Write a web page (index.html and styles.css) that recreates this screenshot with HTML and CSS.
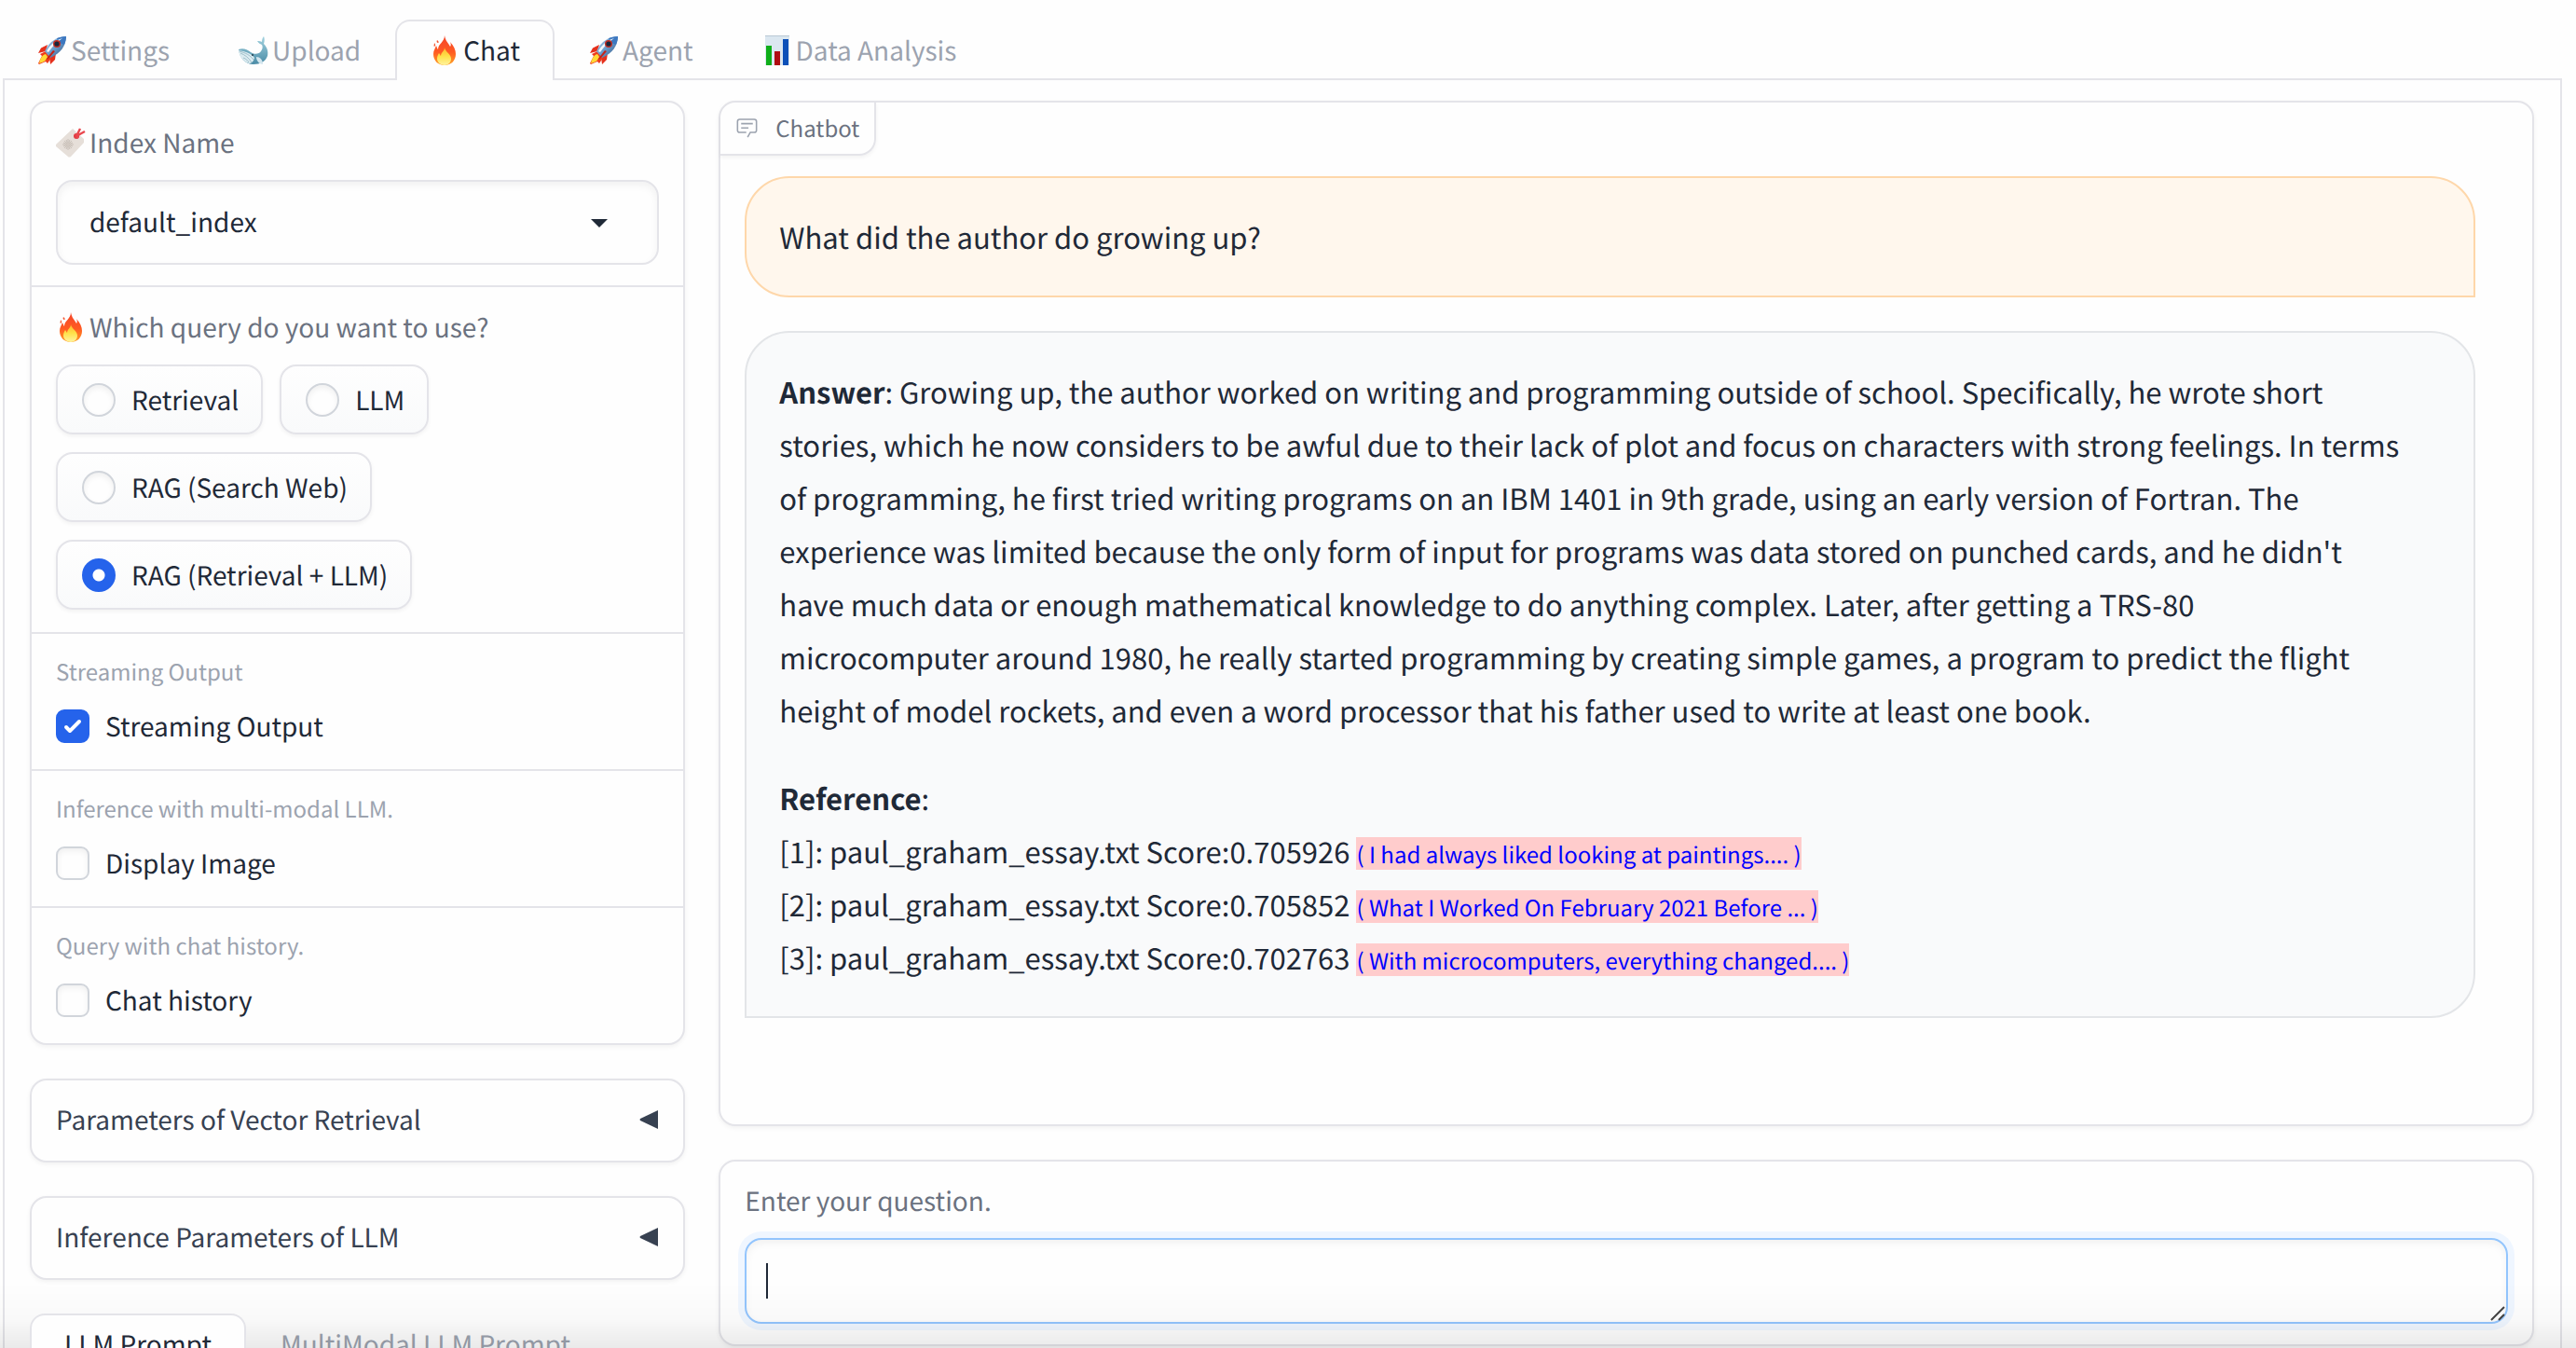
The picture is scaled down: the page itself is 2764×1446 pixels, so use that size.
FILE: index.html
```html
<!DOCTYPE html>
<html lang="en">
<head>
<meta charset="utf-8">
<title>Chat</title>
<link rel="stylesheet" href="styles.css">
</head>
<body>
<svg class="defs" aria-hidden="true">
  <defs>
    <linearGradient id="flame" x1="0" y1="0" x2="0" y2="1"><stop offset="0" stop-color="#f4452a"/><stop offset=".55" stop-color="#ff5a22"/><stop offset="1" stop-color="#ffa125"/></linearGradient>
    <linearGradient id="flame-core" x1="0" y1="0" x2="0" y2="1"><stop offset="0" stop-color="#ffb52b"/><stop offset=".5" stop-color="#ffe14a"/><stop offset="1" stop-color="#fff3a0"/></linearGradient>
    <linearGradient id="hull" x1="0" y1="0" x2="1" y2="1"><stop offset="0" stop-color="#b9d3ea"/><stop offset=".5" stop-color="#6a9ccb"/><stop offset="1" stop-color="#2f4f7c"/></linearGradient>
    <linearGradient id="whale-body" x1="0" y1="0" x2="0" y2="1"><stop offset="0" stop-color="#a3d3e0"/><stop offset="1" stop-color="#4a8ba6"/></linearGradient>
    <symbol id="rocket" viewBox="0 0 32 32">
      <path d="M11 10 4 13.5 1 19l8-2zM20 19l-1 7-5 5-1-8z" fill="#e5301c"/>
      <path d="M9 17 3 20l2 2-4 8 1 1 7-3 2 2 4-6z" fill="#ee3b1c"/>
      <path d="M9 20c-4 1-6 5-7 10 4-1 8-3 9-7z" fill="#ffd935"/>
      <path d="M31 1C22 1 13 6 8 17l6 7C25 19 31 11 31 1z" fill="url(#hull)"/>
      <path d="M31 1c-4 0-7 1-10 2 1 4 4 6 8 7 1-3 2-6 2-9z" fill="#3d78c0"/>
      <path d="M27 3C19 5 13 11 10 17l2 1C16 12 21 7 27 3z" fill="#f2f7fb"/>
      <circle cx="21" cy="9" r="4" fill="#c22c22"/><circle cx="21" cy="9" r="2.6" fill="#18253b"/>
      <path d="M17 16 9 26l3-1 7-8z" fill="#c82116"/>
    </symbol>
    <symbol id="whale" viewBox="0 0 32 32">
      <path d="M0 15c5-2 9 0 13 3 4 3 9 2 11-1 2-3 2-5 1-7-2-1-4-2-5-4 2 0 4 0 5 1 0-3 1-5 2-6 1 2 1 5 0 8 4 4 5 9 4 13-2 6-8 9-15 9C7 31 1 24 0 15z" fill="url(#whale-body)"/>
      <path d="M0 16c7 1 13 3 17 8-1 4-3 6-6 6C5 28 1 23 0 16z" fill="#dcecf1"/>
      <path d="M2 19c5 2 9 5 12 10M1 17c7 2 11 4 15 9M5 24c3 1 5 3 6 5" fill="none" stroke="#8eb1bf" stroke-width=".8"/>
      <path d="M19 23c4 0 7 3 7 8-4 0-7-4-7-8z" fill="#d3e6ee"/>
      <circle cx="15" cy="21" r="1" fill="#233d4b"/>
    </symbol>
    <symbol id="fire" viewBox="0 0 32 32">
      <path d="M16 0c1 6 4 8 6 12 1-1 1-3 0-5 4 4 6 9 6 13 0 7-5 12-12 12S4 27 4 20c0-4 2-6 3-9 1 2 1 3 2 4 0-6 7-8 7-15z" fill="url(#flame)"/>
      <path d="M5 8c0 2-1 3 0 4 2-1 1-3 0-4zM8 5c-1 2 0 3 1 3s1-2-1-3z" fill="#f4512b"/>
      <path d="M16 13c1 5 7 7 7 12 0 4-3 7-7 7s-8-3-8-7c0-3 1-4 2-6 1 1 1 2 2 3 0-4 4-5 4-9z" fill="url(#flame-core)"/>
    </symbol>
    <symbol id="bars" viewBox="0 0 32 32">
      <path d="M3 0h26v32H3z" fill="#dbe7f0"/><path d="M3 0h26v1H3z" fill="#b9c8d4"/>
      <path d="M4 11h6v21H4z" fill="#0fae1a"/><path d="M13 17h6v15h-6z" fill="#b00d12"/><path d="M22 4h6v28h-6z" fill="#0c50b8"/>
    </symbol>
    <symbol id="tag" viewBox="0 0 32 32">
      <path d="M18 1 30 12v4L16 31q-2 1-3 0L0 20v-2z" fill="#e6dfd9"/>
      <g stroke="#c5bcb4" stroke-width=".9"><path d="M13 12v12M7 18h12M9 14l8 8M17 14l-8 8M11 13l4 10M8 16l10 4M8 20l10-4M11 23l4-10"/></g>
      <circle cx="13" cy="18" r="2" fill="#d2c9c2"/>
      <circle cx="22" cy="9" r="3" fill="#e23c42"/><path d="m22 9 4-8m-4 8 9-5m-9 5 2 2" fill="none" stroke="#e9474e" stroke-width="2.4"/>
    </symbol>
  </defs>
</svg>

<div class="app">
  <nav class="tabs" aria-label="Sections">
    <button class="tab"><svg class="emoji"><use href="#rocket"/></svg>Settings</button>
    <button class="tab"><svg class="emoji"><use href="#whale"/></svg>Upload</button>
    <button class="tab active"><svg class="emoji"><use href="#fire"/></svg>Chat</button>
    <button class="tab"><svg class="emoji"><use href="#rocket"/></svg>Agent</button>
    <button class="tab"><svg class="emoji"><use href="#bars"/></svg>Data Analysis</button>
  </nav>

  <main class="panel">
    <div class="column">
      <form class="card">
        <div class="section">
          <label class="label" for="index"><svg class="emoji"><use href="#tag"/></svg>Index Name</label>
          <div class="select">
            <select id="index"><option>default_index</option></select>
            <svg class="chevron" viewBox="0 0 18 9"><path d="M0 0h18L9 9z"/></svg>
          </div>
        </div>
        <fieldset class="section">
          <legend class="label"><svg class="emoji"><use href="#fire"/></svg>Which query do you want to use?</legend>
          <div class="choices">
            <label class="choice"><input type="radio" name="query">Retrieval</label>
            <label class="choice"><input type="radio" name="query">LLM</label>
            <label class="choice"><input type="radio" name="query">RAG (Search Web)</label>
            <label class="choice"><input type="radio" name="query" checked>RAG (Retrieval + LLM)</label>
          </div>
        </fieldset>
        <div class="section toggle">
          <span class="info">Streaming Output</span>
          <label class="check"><input type="checkbox" checked>Streaming Output</label>
        </div>
        <div class="section toggle">
          <span class="info">Inference with multi-modal LLM.</span>
          <label class="check"><input type="checkbox">Display Image</label>
        </div>
        <div class="section toggle">
          <span class="info">Query with chat history.</span>
          <label class="check"><input type="checkbox">Chat history</label>
        </div>
      </form>

      <button class="card accordion">Parameters of Vector Retrieval<svg class="arrow" viewBox="0 0 20 20"><path d="M20 0v20L1 11q-1-1 0-2z"/></svg></button>
      <button class="card accordion">Inference Parameters of LLM<svg class="arrow" viewBox="0 0 20 20"><path d="M20 0v20L1 11q-1-1 0-2z"/></svg></button>

      <nav class="tabs inner" aria-label="Prompts">
        <button class="tab active">LLM Prompt</button>
        <button class="tab">MultiModal LLM Prompt</button>
      </nav>
    </div>

    <div class="column">
      <section class="card chatbot">
        <h2 class="badge">
          <svg class="chat-icon" viewBox="0 0 32 32"><path d="M17.74 30 16 29l4-7h6a2 2 0 0 0 2-2V8a2 2 0 0 0-2-2H6a2 2 0 0 0-2 2v12a2 2 0 0 0 2 2h9v2H6a4 4 0 0 1-4-4V8a4 4 0 0 1 4-4h20a4 4 0 0 1 4 4v12a4 4 0 0 1-4 4h-4.84Z"/><path d="M8 10h16v2H8zM8 16h10v2H8z"/></svg>
          Chatbot
        </h2>
        <div class="message user"><p>What did the author do growing up?</p></div>
        <div class="message bot">
          <p><b>Answer</b>: Growing up, the author worked on writing and programming outside of school. Specifically, he wrote short stories, which he now considers to be awful due to their lack of plot and focus on characters with strong feelings. In terms of programming, he first tried writing programs on an IBM 1401 in 9th grade, using an early version of Fortran. The experience was limited because the only form of input for programs was data stored on punched cards, and he didn't have much data or enough mathematical knowledge to do anything complex. Later, after getting a TRS-80 microcomputer around 1980, he really started programming by creating simple games, a program to predict the flight height of model rockets, and even a word processor that his father used to write at least one book.</p>
          <p><b>Reference</b>:<br>
          [1]: paul_graham_essay.txt Score:0.705926 <a class="source" href="#ref1">( I had always liked looking at paintings.... )</a><br>
          [2]: paul_graham_essay.txt Score:0.705852 <a class="source" href="#ref2">( What I Worked On February 2021 Before ... )</a><br>
          [3]: paul_graham_essay.txt Score:0.702763 <a class="source" href="#ref3">( With microcomputers, everything changed.... )</a></p>
        </div>
      </section>

      <section class="card question">
        <label class="label" for="question">Enter your question.</label>
        <div class="field">
          <textarea id="question" rows="1"></textarea>
          <span class="caret"></span>
          <svg class="grip" viewBox="0 0 16 16"><path d="M1 15 15 1M9 15l6-6"/></svg>
        </div>
      </section>
    </div>
  </main>
</div>
<div class="fade"></div>
</body>
</html>
```
FILE: styles.css
```css
:root {
  --line: #e4e4e9;
  --text: #1f2937;
  --label: #6b7280;
  --muted: #9ca3af;
}

* { box-sizing: border-box; }

body {
  margin: 0;
  height: 100vh;
  overflow: hidden;
  background: #fefefe;
  color: var(--text);
  font-family: "Noto Sans CJK SC", "Noto Sans", sans-serif;
  font-size: 28px;
  line-height: 40px;
  text-rendering: geometricPrecision;
}

button, select, textarea { font: inherit; color: inherit; text-rendering: inherit; }
.defs { position: absolute; width: 0; height: 0; }

.app {
  display: flex;
  flex-direction: column;
  min-height: 100vh;
  padding: 21px 15px 0 3px;
}

.tabs { display: flex; }
.tab {
  display: flex;
  align-items: center;
  height: 65px;
  padding: 0 35px 2px;
  border: 2px solid transparent;
  border-bottom: 0;
  background: none;
  color: var(--muted);
  white-space: nowrap;
}
.tab.active {
  border-color: var(--line);
  border-radius: 16px 16px 0 0;
  background: #fefefe;
  color: var(--text);
}
.emoji { flex: none; width: 32px; height: 32px; margin-right: 4px; }

.panel {
  flex: 1;
  display: grid;
  grid-template-columns: minmax(0, 13fr) minmax(0, 36fr);
  align-items: start;
  gap: 36px;
  margin-top: -2px;
  padding: 22px 28px 22px 27px;
  border: 2px solid var(--line);
}
.tabs .active { position: relative; z-index: 1; }
.column { display: flex; flex-direction: column; gap: 36px; }

.card {
  border: 2px solid var(--line);
  border-radius: 18px;
  background: #fefefe;
  box-shadow: 0 2px 5px rgba(0, 0, 0, .05);
}
.section {
  margin: 0;
  padding: 23px 26px 22px;
  border: 0;
  border-bottom: 2px solid var(--line);
}
.section:last-child { border-bottom: 0; }
.label {
  display: flex;
  align-items: center;
  margin-bottom: 20px;
  padding: 0;
  color: var(--label);
}
fieldset.section { padding-bottom: 24px; }
fieldset .label { float: left; width: 100%; }

.select { position: relative; }
.select select {
  appearance: none;
  display: block;
  width: 100%;
  height: 91px;
  padding: 0 34px 2px;
  border: 2px solid var(--line);
  border-radius: 18px;
  background: #fefefe;
  box-shadow: inset 0 4px 8px rgba(0, 0, 0, .05);
}
.chevron { position: absolute; right: 55px; top: 42px; width: 18px; height: 9px; fill: var(--text); }

.choices { clear: both; display: flex; flex-wrap: wrap; gap: 19px 18px; }
.choice {
  display: flex;
  align-items: center;
  gap: 17px;
  height: 75px;
  padding: 0 24px 0 26px;
  border: 2px solid var(--line);
  border-radius: 18px;
  background: linear-gradient(#fefefe, #f9fafb);
  box-shadow: 0 2px 4px rgba(0, 0, 0, .05);
}
input {
  appearance: none;
  flex: none;
  width: 36px;
  height: 36px;
  margin: 0;
  border: 2px solid #d1d5db;
  background: #fefefe center / 100% no-repeat;
  box-shadow: inset 0 3px 6px rgba(0, 0, 0, .06);
}
input[type="radio"] { border-radius: 50%; }
input[type="checkbox"] { border-radius: 9px; }
input:checked { border-color: #2563eb; background-color: #2563eb; box-shadow: none; }
input[type="radio"]:checked { background-image: radial-gradient(circle, #fff 6px, transparent 7px); }
input[type="checkbox"]:checked {
  background-image: url("data:image/svg+xml,%3Csvg viewBox='0 0 16 16' fill='white' xmlns='http://www.w3.org/2000/svg'%3E%3Cpath d='M12.207 4.793a1 1 0 010 1.414l-5 5a1 1 0 01-1.414 0l-2-2a1 1 0 011.414-1.414L6.5 9.086l4.293-4.293a1 1 0 011.414 0z'/%3E%3C/svg%3E");
}

.toggle { padding: 20px 26px 26px; }
.info { display: block; margin-bottom: 19px; font-size: 24px; line-height: 40px; color: var(--muted); }
.check { display: flex; align-items: center; gap: 17px; }

.accordion {
  display: flex;
  align-items: center;
  justify-content: space-between;
  height: 90px;
  padding: 0 27px 2px 26px;
  color: #374151;
}
.arrow { width: 20px; height: 20px; fill: #374151; }

.chatbot {
  position: relative;
  display: flex;
  flex-direction: column;
  gap: 36px;
  min-height: 1100px;
  padding: 79px 61px 36px 26px;
}
.badge {
  position: absolute;
  top: 0;
  left: 0;
  display: flex;
  align-items: center;
  gap: 18px;
  height: 57px;
  margin: 0;
  padding: 0 16px 2px;
  border: solid var(--line);
  border-width: 0 2px 2px 0;
  border-radius: 16px 0 18px 0;
  box-shadow: 0 2px 4px rgba(0, 0, 0, .05);
  color: var(--label);
  font-size: 24px;
  font-weight: 400;
}
.chat-icon { width: 25px; height: 25px; fill: var(--muted); }

.message {
  padding: 34px 72px 35px 35px;
  border: 2px solid;
  border-radius: 48px;
  font-size: 31px;
  line-height: 57px;
}
.message p { margin: 0; }
.message p + p { margin-top: 37px; }
.user { border-color: #fed7aa; border-bottom-right-radius: 0; background: #fff7ed; }
.bot { border-color: #e3e5e8; border-bottom-left-radius: 0; background: #f9fafb; }
.source {
  background: #fcc;
  color: #00f;
  font-size: 24px;
  line-height: 33px;
  text-decoration: none;
}

.question { padding: 22px 26px; }
.question .label { margin-bottom: 20px; }
.field { position: relative; }
.field textarea {
  display: block;
  width: 100%;
  height: 92px;
  padding: 22px;
  border: 2px solid #93c5fd;
  border-radius: 18px;
  outline: 0;
  resize: none;
  background: #fefefe;
  box-shadow: 0 0 0 7px #eff6ff, inset 0 4px 8px rgba(0, 0, 0, .05);
}
.caret { position: absolute; top: 27px; left: 23px; width: 2px; height: 38px; background: var(--text); }
.grip { position: absolute; right: 3px; bottom: 3px; width: 16px; height: 16px; fill: none; stroke: #444; stroke-width: 2; }

.fade {
  position: fixed;
  inset: auto 0 0;
  height: 70px;
  background: linear-gradient(transparent, rgba(0, 0, 0, .02) 55%, rgba(0, 0, 0, .08));
  pointer-events: none;
}
```
